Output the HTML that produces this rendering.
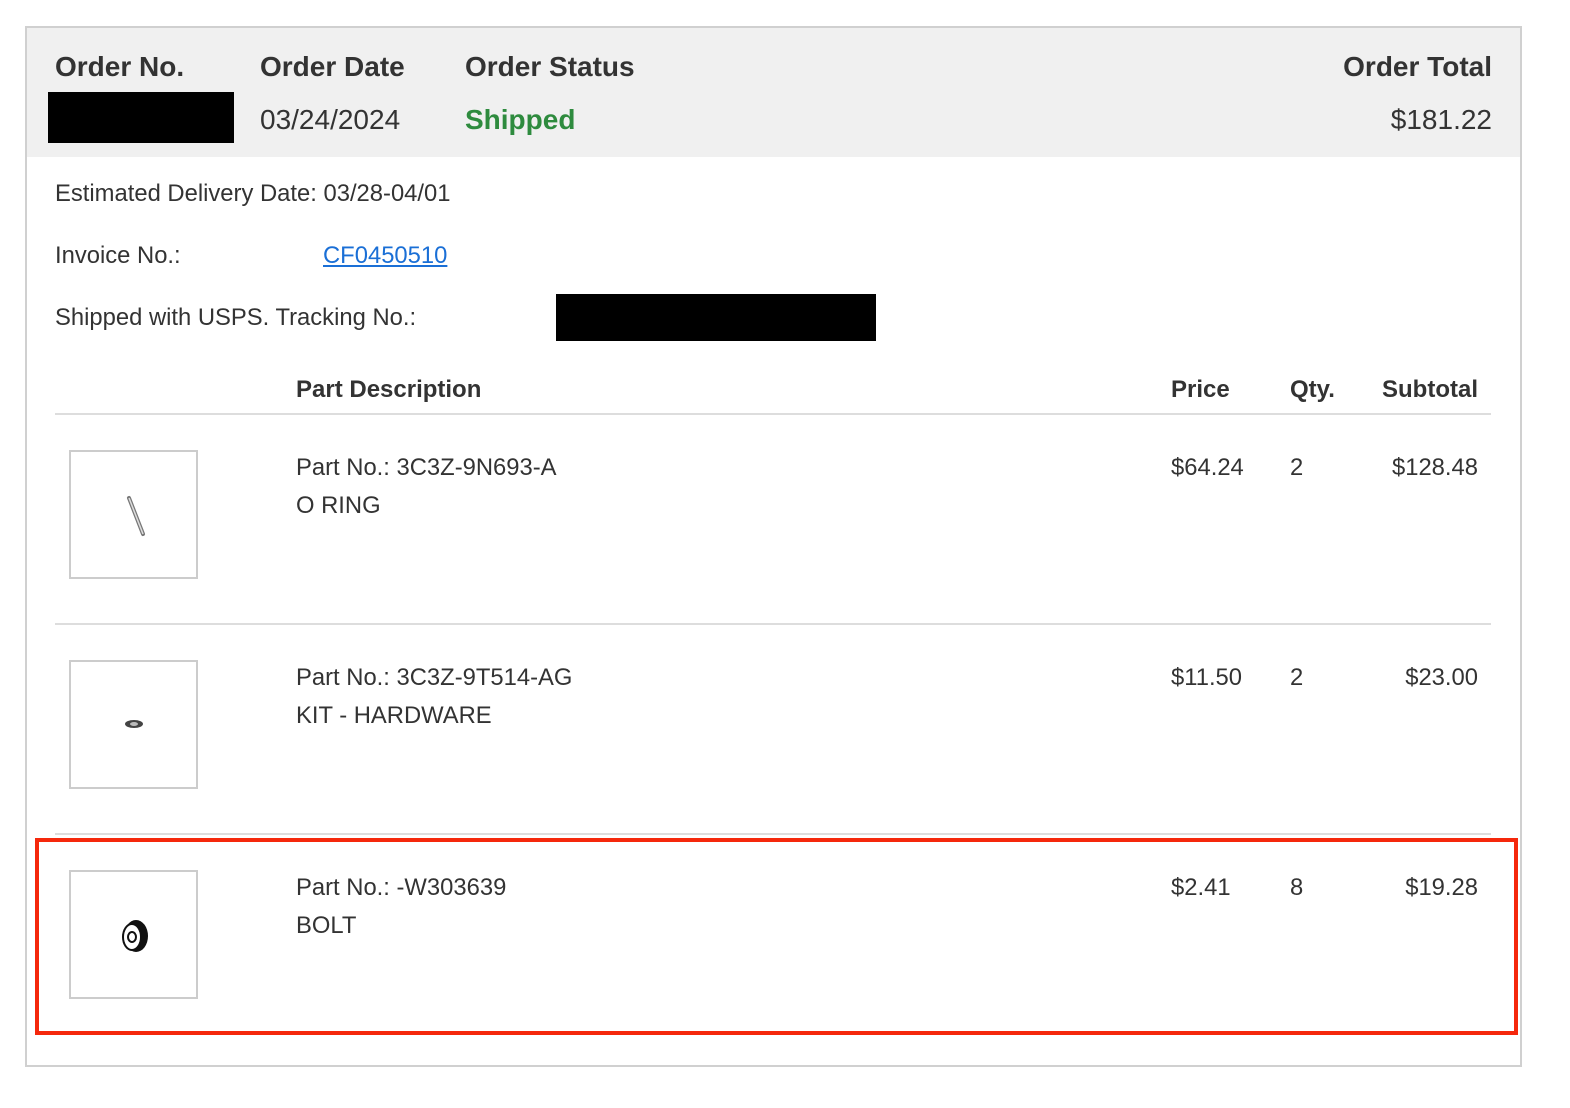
<!DOCTYPE html>
<html><head><meta charset="utf-8"><style>
body{margin:0;width:1570px;height:1108px;background:#fff;font-family:"Liberation Sans",Arial,sans-serif;color:#333;position:relative;overflow:hidden}
.a{position:absolute;white-space:nowrap}
.h{font-weight:bold;font-size:28px;color:#333}
.t{font-size:23.8px}
.b{font-weight:bold;font-size:24px}
.img{position:absolute;left:69px;width:125px;height:125px;border:2px solid #ccc;box-sizing:content-box}
.line{position:absolute;left:55px;width:1436px;height:2px;background:#ddd}
</style></head><body>
<div class="a" style="left:25px;top:26px;width:1493px;height:1037px;border:2px solid #d0d0d0"></div>
<div class="a" style="left:27px;top:28px;width:1493px;height:129px;background:#f0f0f0"></div>
<div class="a h" style="left:55px;top:51px">Order No.</div>
<div class="a h" style="left:260px;top:51px">Order Date</div>
<div class="a h" style="left:465px;top:51px">Order Status</div>
<div class="a h" style="right:78px;top:51px">Order Total</div>
<div class="a" style="left:48px;top:92px;width:186px;height:51px;background:#000"></div>
<div class="a" style="left:260px;top:104px;font-size:28px">03/24/2024</div>
<div class="a" style="left:465px;top:104px;font-size:28px;font-weight:bold;color:#2e8b3e">Shipped</div>
<div class="a" style="right:78px;top:104px;font-size:28px">$181.22</div>
<div class="a t" style="left:55px;top:180px">Estimated Delivery Date: 03/28-04/01</div>
<div class="a t" style="left:55px;top:242px">Invoice No.:</div>
<div class="a t" style="left:323px;top:242px;color:#1a6fd6;text-decoration:underline">CF0450510</div>
<div class="a t" style="left:55px;top:304px">Shipped with USPS. Tracking No.:</div>
<div class="a" style="left:556px;top:294px;width:320px;height:47px;background:#000"></div>
<div class="a b" style="left:296px;top:376px">Part Description</div>
<div class="a b" style="left:1171px;top:376px">Price</div>
<div class="a b" style="left:1290px;top:376px">Qty.</div>
<div class="a b" style="right:92px;top:376px">Subtotal</div>
<div class="line" style="top:413px"></div>
<div class="img" style="top:450px"><svg width="125" height="125"><line x1="58" y1="46" x2="72" y2="82" stroke="#777" stroke-width="4" stroke-linecap="round"/><line x1="58" y1="46" x2="72" y2="82" stroke="#ddd" stroke-width="1.5"/></svg></div>
<div class="a t" style="left:296px;top:454px">Part No.: 3C3Z-9N693-A</div>
<div class="a t" style="left:296px;top:492px">O RING</div>
<div class="a t" style="left:1171px;top:454px">$64.24</div>
<div class="a t" style="left:1290px;top:454px">2</div>
<div class="a t" style="right:92px;top:454px">$128.48</div>
<div class="line" style="top:623px"></div>
<div class="img" style="top:660px"><svg width="125" height="125"><ellipse cx="63" cy="62" rx="9" ry="4" fill="#444"/><ellipse cx="63" cy="62" rx="4" ry="2" fill="#bbb"/></svg></div>
<div class="a t" style="left:296px;top:664px">Part No.: 3C3Z-9T514-AG</div>
<div class="a t" style="left:296px;top:702px">KIT - HARDWARE</div>
<div class="a t" style="left:1171px;top:664px">$11.50</div>
<div class="a t" style="left:1290px;top:664px">2</div>
<div class="a t" style="right:92px;top:664px">$23.00</div>
<div class="line" style="top:833px"></div>
<div class="a" style="left:35px;top:838px;width:1475px;height:189px;border:4px solid #f5280c"></div>
<div class="img" style="top:870px"><svg width="125" height="125"><ellipse cx="65" cy="64" rx="12" ry="16" fill="#111"/><ellipse cx="61" cy="65" rx="9" ry="13" fill="#fff" stroke="#111" stroke-width="2"/><ellipse cx="61" cy="65" rx="4" ry="5" fill="none" stroke="#111" stroke-width="2"/></svg></div>
<div class="a t" style="left:296px;top:874px">Part No.: -W303639</div>
<div class="a t" style="left:296px;top:912px">BOLT</div>
<div class="a t" style="left:1171px;top:874px">$2.41</div>
<div class="a t" style="left:1290px;top:874px">8</div>
<div class="a t" style="right:92px;top:874px">$19.28</div>
</body></html>
